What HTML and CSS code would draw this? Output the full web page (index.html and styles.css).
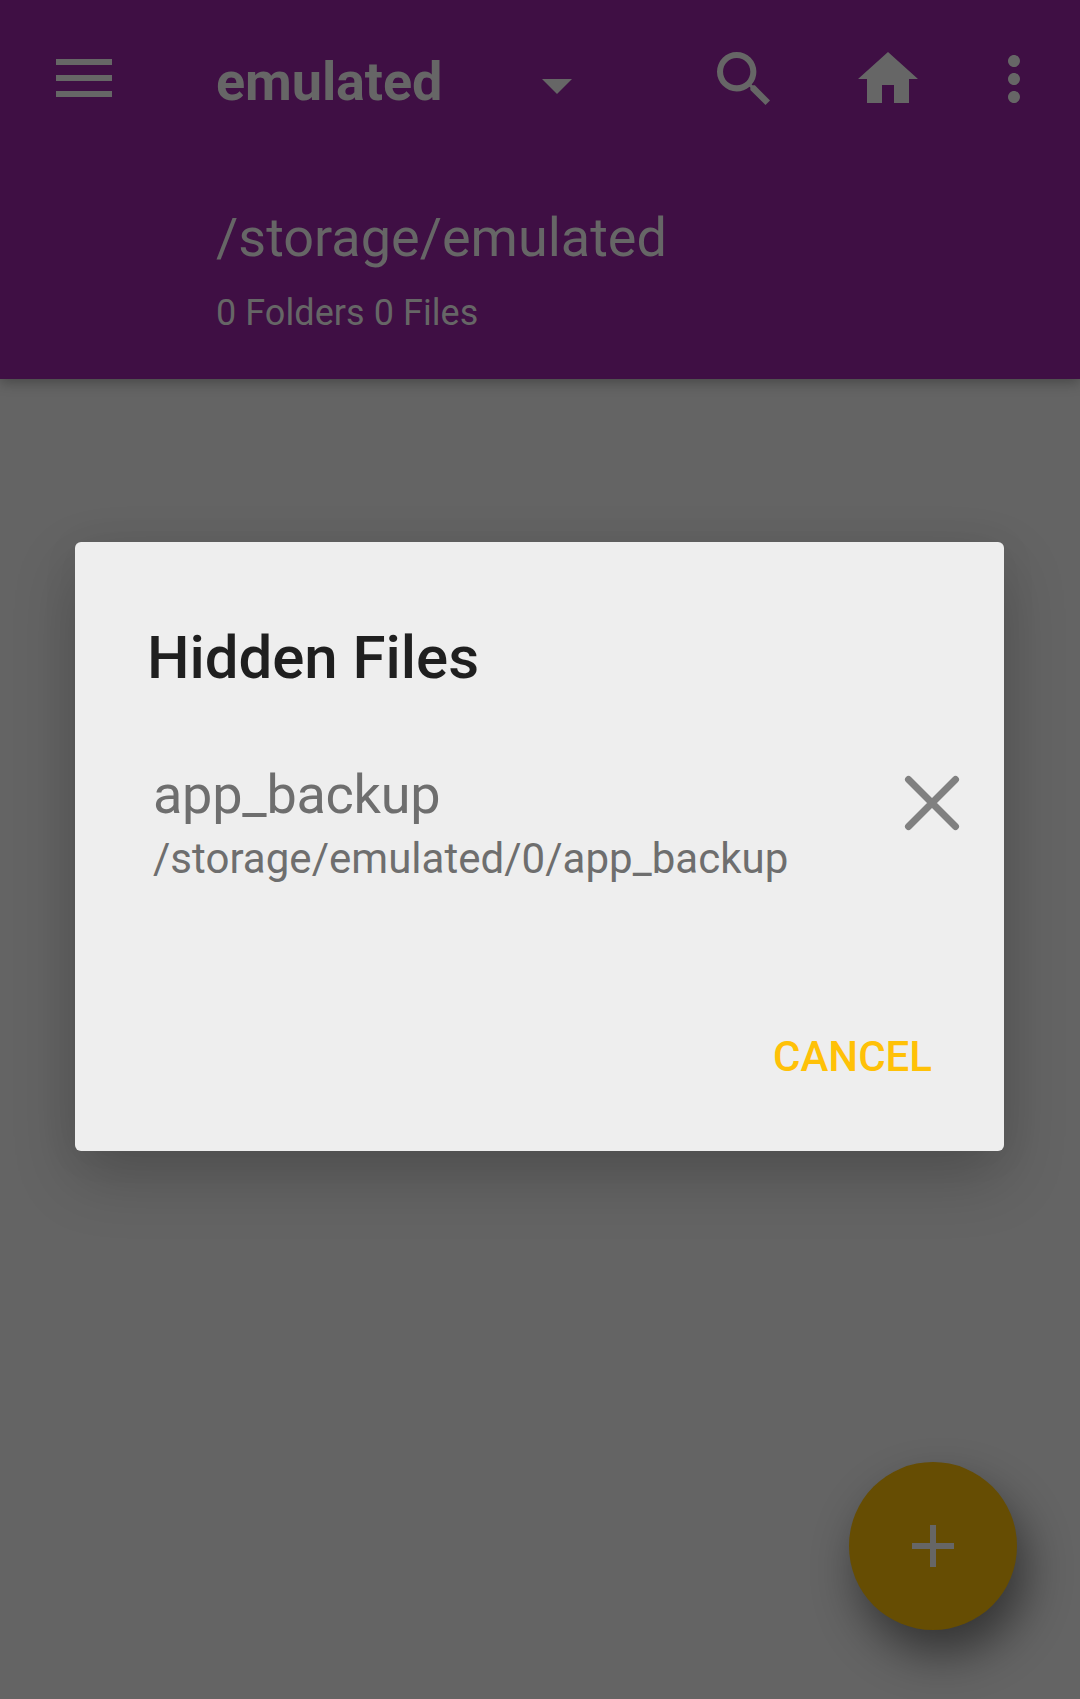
FILE: index.html
```html
<!DOCTYPE html>
<html lang="en">
<head>
<meta charset="utf-8">
<title>Hidden Files</title>
<link rel="stylesheet" href="styles.css">
</head>
<body>
<div class="screen">
  <header class="appbar">
    <div class="toolbar">
      <svg class="icon menu" viewBox="0 0 56 38"><path d="M0 0h56v6H0zM0 16h56v6H0zM0 32h56v6H0z"/></svg>
      <span class="title">emulated</span>
      <svg class="icon caret" viewBox="0 0 30 15"><path d="M0 0h30L15 15z"/></svg>
      <svg class="icon search" viewBox="3 3 17.49 17.49"><path d="M15.5 14h-.79l-.28-.27A6.47 6.47 0 0 0 16 9.5 6.5 6.5 0 1 0 9.5 16c1.61 0 3.09-.59 4.23-1.57l.27.28v.79l5 4.99L20.49 19l-4.99-5zm-6 0C7.01 14 5 11.99 5 9.5S7.01 5 9.5 5 14 7.01 14 9.5 11.99 14 9.5 14z"/></svg>
      <svg class="icon home" viewBox="2 3 20 17"><path d="M10 20v-6h4v6h5v-8h3L12 3 2 12h3v8z"/></svg>
      <svg class="icon more" viewBox="10 4 4 16"><path d="M12 8c1.1 0 2-.9 2-2s-.9-2-2-2-2 .9-2 2 .9 2 2 2zm0 2c-1.1 0-2 .9-2 2s.9 2 2 2 2-.9 2-2-.9-2-2-2zm0 6c-1.1 0-2 .9-2 2s.9 2 2 2 2-.9 2-2-.9-2-2-2z"/></svg>
    </div>
    <div class="path">/storage/emulated</div>
    <div class="counts">0 Folders 0 Files</div>
  </header>
  <section class="dialog">
    <h1 class="heading">Hidden Files</h1>
    <div class="row">
      <div class="file">
        <div class="name">app_backup</div>
        <div class="location">/storage/emulated/0/app_backup</div>
      </div>
      <svg class="close" viewBox="0 0 56 56"><path d="M4.500 4.500l47 47M51.500 4.500l-47 47"/></svg>
    </div>
    <button class="cancel">CANCEL</button>
  </section>
  <button class="fab"><svg viewBox="0 0 42 42"><path d="M18 0h6v18h18v6H24v18h-6V24H0v-6h18z"/></svg></button>
</div>
</body>
</html>
```
FILE: styles.css
```css
* { box-sizing: border-box; }
body { margin: 0; font-family: Roboto, "Liberation Sans", sans-serif; }
.screen { display: flex; flex-direction: column; height: 1699px; overflow: hidden; background: #646464; }
.appbar { flex: none; height: 379px; background: #3f0f44; color: #666; box-shadow: 0 4px 12px rgba(0,0,0,.27); }
.toolbar { display: flex; align-items: flex-start; height: 168px; padding-left: 56px; }
.icon { flex: none; fill: #666; }
.menu { width: 56px; height: 38px; margin-top: 59px; }
.title { width: 226px; margin: 50px 0 0 104px; font-size: 54px; line-height: 64px; font-weight: 700; letter-spacing: -.1px; white-space: nowrap; }
.caret { width: 30px; height: 15px; margin: 79px 0 0 100px; }
.search { width: 53px; height: 53px; margin: 52px 0 0 145px; }
.home { width: 60px; height: 51px; margin: 52px 0 0 88px; }
.more { width: 12px; height: 48px; margin: 55px 0 0 90px; }
.path { margin-left: 216px; margin-top: 38px; font-size: 54px; line-height: 64px; }
.counts { margin-left: 216px; margin-top: 21px; font-size: 36px; line-height: 44px; letter-spacing: .06px; }
.dialog { flex: none; display: flex; flex-direction: column; width: 929px; height: 609px; margin: 163px 0 0 75px; padding: 80px 44px 0 72px; background: #eee; border-radius: 6px; box-shadow: 0 26px 64px rgba(0,0,0,.2), 0 4px 40px rgba(0,0,0,.05); }
.heading { margin: 0; font-size: 60px; line-height: 72px; font-weight: 500; letter-spacing: -.05px; color: #1f1f1f; }
.row { display: flex; justify-content: space-between; margin-top: 69px; padding-left: 6px; color: #6e6e6e; }
.name { font-size: 54px; line-height: 64px; letter-spacing: -.25px; }
.location { margin-top: 7px; font-size: 42px; line-height: 50px; letter-spacing: .03px; }
.close { width: 56px; height: 56px; margin-top: 12px; fill: none; stroke: #808080; stroke-width: 7; stroke-linecap: round; }
.cancel { align-self: flex-end; margin: 148px 28px 0 0; padding: 0; border: 0; background: none; color: #ffc107; font: 500 42px/50px Roboto, sans-serif; }
.fab { flex: none; display: flex; align-items: center; justify-content: center; width: 168px; height: 168px; margin: 311px 0 0 849px; padding: 0; border: 0; border-radius: 50%; background: #664d03; box-shadow: 9px 24px 46px rgba(0,0,0,.48); }
.fab svg { width: 42px; height: 42px; fill: #666; }
```
